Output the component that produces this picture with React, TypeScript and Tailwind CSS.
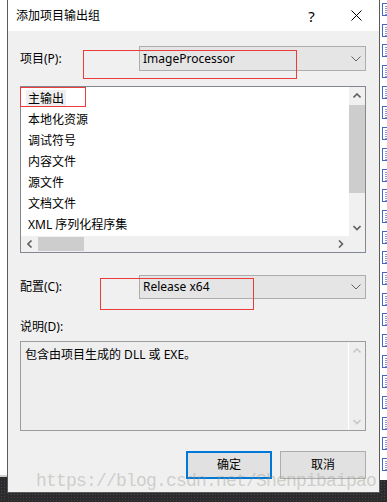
import React from 'react';

const items = ['主输出', '本地化资源', '调试符号', '内容文件', '源文件', '文档文件', 'XML 序列化程序集'];

const Chevron: React.FC<{ dir: 'up' | 'down' | 'left' | 'right'; color?: string; combo?: boolean }> = ({
  dir,
  color = '#606060',
  combo,
}) => {
  if (combo) {
    return (
      <svg width="10" height="6" viewBox="0 0 10 6">
        <polyline points="0.5,0.5 5,5 9.5,0.5" fill="none" stroke={color} strokeWidth="1" />
      </svg>
    );
  }
  const pts: Record<string, string> = {
    up: '0.5,4.5 4,1 7.5,4.5',
    down: '0.5,1 4,4.5 7.5,1',
    left: '4.5,0.5 1,4 4.5,7.5',
    right: '1,0.5 4.5,4 1,7.5',
  };
  const horiz = dir === 'left' || dir === 'right';
  return (
    <svg width={horiz ? 6 : 8} height={horiz ? 8 : 6} viewBox={horiz ? '0 0 6 8' : '0 0 8 6'}>
      <polyline points={pts[dir]} fill="none" stroke={color} strokeWidth="1.6" />
    </svg>
  );
};

const Combo: React.FC<{ value: string; h: string }> = ({ value, h }) => (
  <div className={`flex-1 ${h} flex items-center justify-between border border-[#adadad] bg-[#e5e5e5] pl-[3px] pr-[4px]`}>
    <span className="leading-[16px]">{value}</span>
    <Chevron dir="down" combo />
  </div>
);

const DarkFloor: React.FC<{ h: string }> = ({ h }) => (
  <div className={`${h} bg-[#2b2b2d] bg-[radial-gradient(#46464a_0.8px,transparent_0.8px)] bg-[length:3px_3px]`} />
);

export default function App() {
  return (
    <div className="relative flex w-[387px] h-[502px] overflow-hidden bg-white text-[12px] text-black font-['Noto_Sans','Noto_Sans_CJK_SC',sans-serif]">
      {/* left strip of the page behind */}
      <div className="flex w-[7px] flex-col">
        <div className="flex-1 bg-white" />
        <div className="h-[2px] bg-[#cfcfcf]" />
        <DarkFloor h="h-[25px]" />
      </div>

      {/* dialog */}
      <div className="flex w-[373px] flex-col">
        <div className="flex h-[493px] flex-col border-x border-b border-[#5a5a5a]">
          {/* title bar */}
          <div className="flex h-[31px] items-center bg-white">
            <div className="flex-1 pl-[8px] leading-[16px]">添加项目输出组</div>
            <div className="flex w-[45px] justify-center text-[15px] leading-[16px]">?</div>
            <div className="flex w-[45px] justify-center">
              <svg width="11" height="11" viewBox="0 0 11 11">
                <path d="M0.5 0.5 L10.5 10.5 M10.5 0.5 L0.5 10.5" stroke="#000" strokeWidth="1" />
              </svg>
            </div>
          </div>

          {/* body */}
          <div className="flex flex-1 flex-col bg-[#f0f0f0] pl-[12px] pr-[13px]">
            <div className="mt-[15px] flex h-[25px] items-center">
              <div className="w-[119px] leading-[16px]">项目(P):</div>
              <Combo value="ImageProcessor" h="h-[25px]" />
            </div>

            {/* list box */}
            <div className="mt-[15px] flex h-[167px] flex-col border border-[#828790] bg-white">
              <div className="flex flex-1">
                <div className="flex flex-1 flex-col pt-[1px]">
                  {items.map((it, i) => (
                    <div key={it} className="flex h-[21px] items-center pl-[5px]">
                      <span className={`px-[2px] leading-[17px] ${i === 0 ? 'bg-[#efefef]' : ''}`}>{it}</span>
                    </div>
                  ))}
                </div>
                <div className="flex w-[16px] flex-col bg-[#f0f0f0]">
                  <div className="flex h-[17px] items-center justify-center">
                    <Chevron dir="up" />
                  </div>
                  <div className="mt-[1px] h-[88px] bg-[#cdcdcd]" />
                  <div className="flex-1" />
                  <div className="flex h-[17px] items-center justify-center">
                    <Chevron dir="down" />
                  </div>
                </div>
              </div>
              <div className="flex h-[16px] bg-[#f0f0f0]">
                <div className="flex w-[17px] items-center justify-center">
                  <Chevron dir="left" />
                </div>
                <div className="my-[1px] w-[46px] bg-[#cdcdcd]" />
                <div className="flex-1" />
                <div className="flex w-[17px] items-center justify-center">
                  <Chevron dir="right" />
                </div>
                <div className="w-[16px]" />
              </div>
            </div>

            <div className="mt-[22px] flex h-[24px] items-center">
              <div className="w-[119px] leading-[16px]">配置(C):</div>
              <Combo value="Release x64" h="h-[24px]" />
            </div>

            <div className="mt-[20px] leading-[16px]">说明(D):</div>

            <div className="mt-[6px] flex h-[90px] border border-[#9c9c9c] bg-[#eeeeee]">
              <div className="flex-1 pl-[4px] pt-[5px] leading-[16px]">包含由项目生成的 DLL 或 EXE。</div>
              <div className="flex w-[17px] flex-col border-l border-white">
                <div className="flex h-[17px] items-center justify-center">
                  <Chevron dir="up" color="#c8c8c8" />
                </div>
                <div className="flex-1" />
                <div className="flex h-[17px] items-center justify-center">
                  <Chevron dir="down" color="#c8c8c8" />
                </div>
              </div>
            </div>

            <div className="mt-[20px] flex justify-end gap-[8px]">
              <button className="flex h-[28px] w-[86px] items-center justify-center border-2 border-[#0078d7] bg-[#e1e1e1] leading-[16px]">
                确定
              </button>
              <button className="flex h-[28px] w-[86px] items-center justify-center border border-[#adadad] bg-[#e1e1e1] leading-[16px]">
                取消
              </button>
            </div>
          </div>
        </div>
        <DarkFloor h="flex-1" />
      </div>

      {/* right strip: tree icons of the window behind */}
      <div className="flex w-[7px] flex-col">
        <div className="flex flex-1 flex-col bg-white pt-[3px]">
          {Array.from({ length: 23 }).map((_, i) => (
            <div key={i} className="flex h-[20.7px] items-start pl-[2px]">
              <div className="h-[13px] w-[6px] border-y border-l border-[#4169c8] bg-[repeating-linear-gradient(to_bottom,#7d9be0_0px,#7d9be0_1px,transparent_1px,transparent_2px)] bg-[length:2px_100%] bg-no-repeat bg-[position:2px_2px]" />
            </div>
          ))}
        </div>
        <DarkFloor h="h-[22px]" />
      </div>

      {/* annotation boxes */}
      <div className="absolute left-[83px] top-[50px] h-[29px] w-[214px] border border-[#ec3b3b]" />
      <div className="absolute left-[20px] top-[87px] h-[20px] w-[66px] border border-[#ec3b3b]" />
      <div className="absolute left-[100px] top-[278px] h-[32px] w-[154px] border border-[#ec3b3b]" />

      {/* watermark */}
      <div className="pointer-events-none absolute left-[36px] top-[470px] whitespace-nowrap text-[18px] leading-[22px] tracking-[-0.8px] text-[rgba(150,150,140,0.4)] font-['Liberation_Mono',monospace]">
        https://blog.csdn.net/Shenpibaipao
      </div>
    </div>
  );
}
